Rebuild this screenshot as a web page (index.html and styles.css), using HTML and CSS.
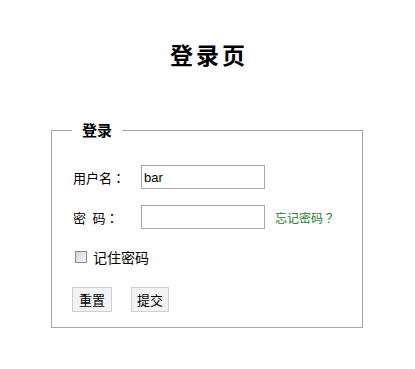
FILE: index.html
```html
<!DOCTYPE html>
<html lang="zh-CN">
<head>
<meta charset="utf-8">
<title>登录页</title>
<link rel="stylesheet" href="styles.css">
</head>
<body>
<h1 class="title">登录页</h1>
<form class="login">
  <fieldset class="box">
    <legend class="box-legend">登录</legend>
    <div class="row">
      <label class="label" for="user">用户名<span class="punct" lang="zh-TW">：</span></label>
      <input class="field" id="user" type="text" value="bar">
    </div>
    <div class="row">
      <label class="label" for="pwd">密&ensp;码<span class="punct" lang="zh-TW">：</span></label>
      <input class="field" id="pwd" type="password">
      <a class="forgot" href="#">忘记密码<span class="punct" lang="zh-TW">？</span></a>
    </div>
    <div class="row row-check">
      <input class="check" id="remember" type="checkbox">
      <label class="check-label" for="remember">记住密码</label>
    </div>
    <div class="row row-buttons">
      <button class="btn" type="reset">重置</button>
      <button class="btn" type="submit">提交</button>
    </div>
  </fieldset>
</form>
</body>
</html>
```

FILE: styles.css
```css
html, body {
  background: #ffffff;
}
body {
  margin: 8px;
  font-family: "Liberation Sans", "Noto Sans CJK SC", sans-serif;
  color: #000;
}
.title {
  margin: 31px 0 0;
  text-align: center;
  font-family: "Noto Sans CJK SC", sans-serif;
  font-size: 23px;
  line-height: 30px;
  font-weight: 700;
  letter-spacing: 3px;
  text-indent: 3px;
}
.login {
  margin: 51px 0 0 43px;
}
.box {
  box-sizing: border-box;
  width: 312px;
  margin: 0;
  padding: 25px 20px 15px;
  border: 1px solid #a6a6a6;
}
.box-legend {
  padding: 0 10px;
  font-family: "Noto Sans CJK SC", sans-serif;
  font-size: 15px;
  line-height: 20px;
  font-weight: 700;
}
.row {
  display: flex;
  align-items: center;
  height: 24px;
  margin-bottom: 16px;
}
.label {
  width: 69px;
  padding-left: 1px;
  box-sizing: border-box;
  font-family: "Noto Sans CJK SC", sans-serif;
  font-size: 13px;
}
.punct {
  font-family: "Noto Sans CJK TC", sans-serif;
}
.field {
  box-sizing: border-box;
  width: 124px;
  height: 24px;
  margin: 0;
  padding: 0 2px;
  border: 1px solid #a9a9a9;
  font-family: "Liberation Sans", sans-serif;
  font-size: 13px;
  color: #000;
  outline: none;
}
.forgot {
  margin-left: 10px;
  font-family: "Noto Sans CJK SC", sans-serif;
  font-size: 12px;
  color: #2a7d2a;
  text-decoration: none;
}
.row-check {
  height: 20px;
  margin-top: 18px;
  margin-bottom: 20px;
}
.check {
  appearance: none;
  -webkit-appearance: none;
  box-sizing: border-box;
  width: 12px;
  height: 12px;
  margin: 0 6px 0 3px;
  border: 1px solid #8c8c8c;
  background: linear-gradient(135deg, #d6d6d6, #f6f6f6);
}
.check-label {
  font-family: "Noto Sans CJK SC", sans-serif;
  font-size: 14px;
}
.row-buttons {
  height: 25px;
  margin-bottom: 0;
  gap: 19px;
}
.btn {
  box-sizing: border-box;
  width: 40px;
  height: 25px;
  margin: 0;
  padding: 0;
  border: 1px solid #cfcfcf;
  background: #f3f3f3;
  font-family: "Noto Sans CJK SC", sans-serif;
  font-size: 13px;
  color: #000;
}
.btn + .btn {
  width: 38px;
}
```
